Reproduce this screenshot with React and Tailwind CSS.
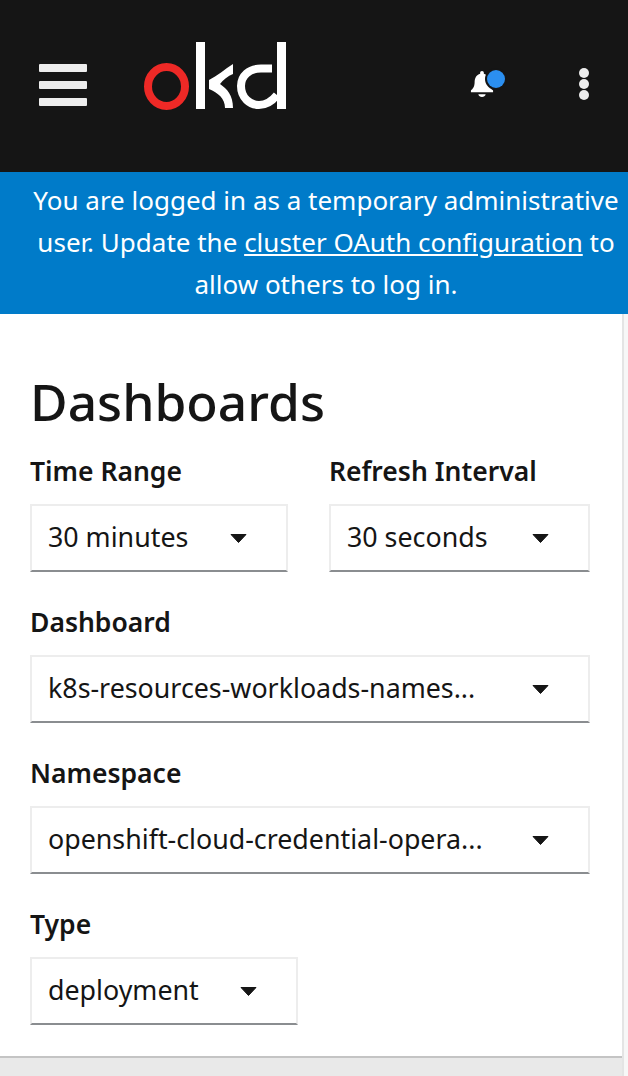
import React from "react";

const font = "font-['Noto_Sans','Liberation_Sans',sans-serif]";

const Caret = () => (
  <svg width="17" height="10" viewBox="0 0 17 10" className="shrink-0" aria-hidden="true">
    <path d="M1 1.5h15L8.500 9.500z" fill="#151515" stroke="#151515" strokeWidth="1" strokeLinejoin="round" />
  </svg>
);

const Dropdown = ({ value, className }) => (
  <button className={`flex h-[68px] items-center justify-between border-2 border-[#ededed] border-b-[#8a8d90] pl-[16px] pr-[39px] text-[26.800px] text-[#151515] ${className}`}>
    <span className="mb-[2px] truncate">{value}</span>
    <Caret />
  </button>
);

const Label = ({ children }) => (
  <div className="mb-[16px] text-[26.500px] leading-[34px] font-semibold text-[#151515]">{children}</div>
);

const Logo = () => (
  <svg width="150" height="72" viewBox="140 40 150 72" aria-hidden="true">
    <ellipse cx="166.500" cy="86.500" rx="18.500" ry="19.500" fill="none" stroke="#ee2926" strokeWidth="8" />
    <path d="M196 42h9v67h-9z" fill="#fff" />
    <path d="M233 64v10c-5 2-10 6-13 10 7 5 13 11 13 24h-8c0-10-7-15-16-19v-9c8-4 16-11 24-16z" fill="#fff" />
    <path d="M277 42h9v67h-9z" fill="#fff" />
    <path d="M272 68.500H261C249 68.500 241 76 241 86C241 98 250 105 259 105C267 105 273 100 277 95" fill="none" stroke="#fff" strokeWidth="8" />
  </svg>
);

const App = () => {
  return (
    <div className={`flex h-[1076px] w-[628px] flex-col overflow-hidden bg-[#f7f7f7] ${font}`}>
      {/* Masthead */}
      <header className="flex h-[172px] shrink-0 items-center bg-[#151515] pl-[39px] pr-[39px]">
        <div className="mb-[2px] flex w-[48px] flex-col gap-[9px]">
          <span className="h-[8px] rounded-[1px] bg-[#ededed]" />
          <span className="h-[8px] rounded-[1px] bg-[#ededed]" />
          <span className="h-[8px] rounded-[1px] bg-[#ededed]" />
        </div>
        <div className="ml-[53px] mb-[20px]">
          <Logo />
        </div>
        <div className="relative ml-auto mr-[85px] mb-[4px]">
          <svg width="24" height="28" viewBox="0 0 26 30" className="block" aria-hidden="true">
            <path d="M13 1c1.200 0 2 .8 2 2v1c4 1 6 5 6 9 0 5 2 7 4 9v2H1v-2c2-2 4-4 4-9 0-4 2-8 6-9V3c0-1.200.8-2 2-2zM9 26h8c-.5 2-2 3-4 3s-3.500-1-4-3z" fill="#fff" />
          </svg>
          <span className="absolute left-[17px] top-0 h-[18px] w-[18px] rounded-full bg-[#2b8ff0] ring-2 ring-[#151515]" />
        </div>
        <div className="mb-[4px] flex flex-col gap-[1px]">
          <span className="h-[10px] w-[10px] rounded-full bg-[#ededed]" />
          <span className="h-[10px] w-[10px] rounded-full bg-[#ededed]" />
          <span className="h-[10px] w-[10px] rounded-full bg-[#ededed]" />
        </div>
      </header>

      {/* Cluster notice */}
      <div className="h-[142px] shrink-0 bg-[#007bc9] pl-[28px] pr-[4px] pt-[7px] text-center text-[26px] leading-[42px] text-white">
        You are logged in as a temporary administrative user. Update the{" "}
        <span className="underline">cluster OAuth configuration</span> to allow others to log in.
      </div>

      <div className="flex min-h-0 flex-1">
        <div className="flex w-[622px] shrink-0 flex-col bg-[#e9e9e9]">
          <main className="h-[744px] shrink-0 border-b-2 border-[#c4c4c4] bg-white pl-[30px] pr-[32px] pt-[53px]">
            <h1 className="text-[51.500px] leading-[68px] font-medium text-[#151515]">Dashboards</h1>

            <div className="mt-[19px] flex gap-[41px]">
              <div>
                <Label>Time Range</Label>
                <Dropdown value="30 minutes" className="w-[258px]" />
              </div>
              <div>
                <Label>Refresh Interval</Label>
                <Dropdown value="30 seconds" className="w-[261px]" />
              </div>
            </div>

            <div className="mt-[33px]">
              <Label>Dashboard</Label>
              <Dropdown value="k8s-resources-workloads-names..." className="w-[560px]" />
            </div>

            <div className="mt-[33px]">
              <Label>Namespace</Label>
              <Dropdown value="openshift-cloud-credential-opera..." className="w-[560px]" />
            </div>

            <div className="mt-[33px]">
              <Label>Type</Label>
              <Dropdown value="deployment" className="w-[268px]" />
            </div>
          </main>
        </div>
        <div className="w-[2px] shrink-0 bg-[#e4e4e4]" />
      </div>
    </div>
  );
};

export default App;
